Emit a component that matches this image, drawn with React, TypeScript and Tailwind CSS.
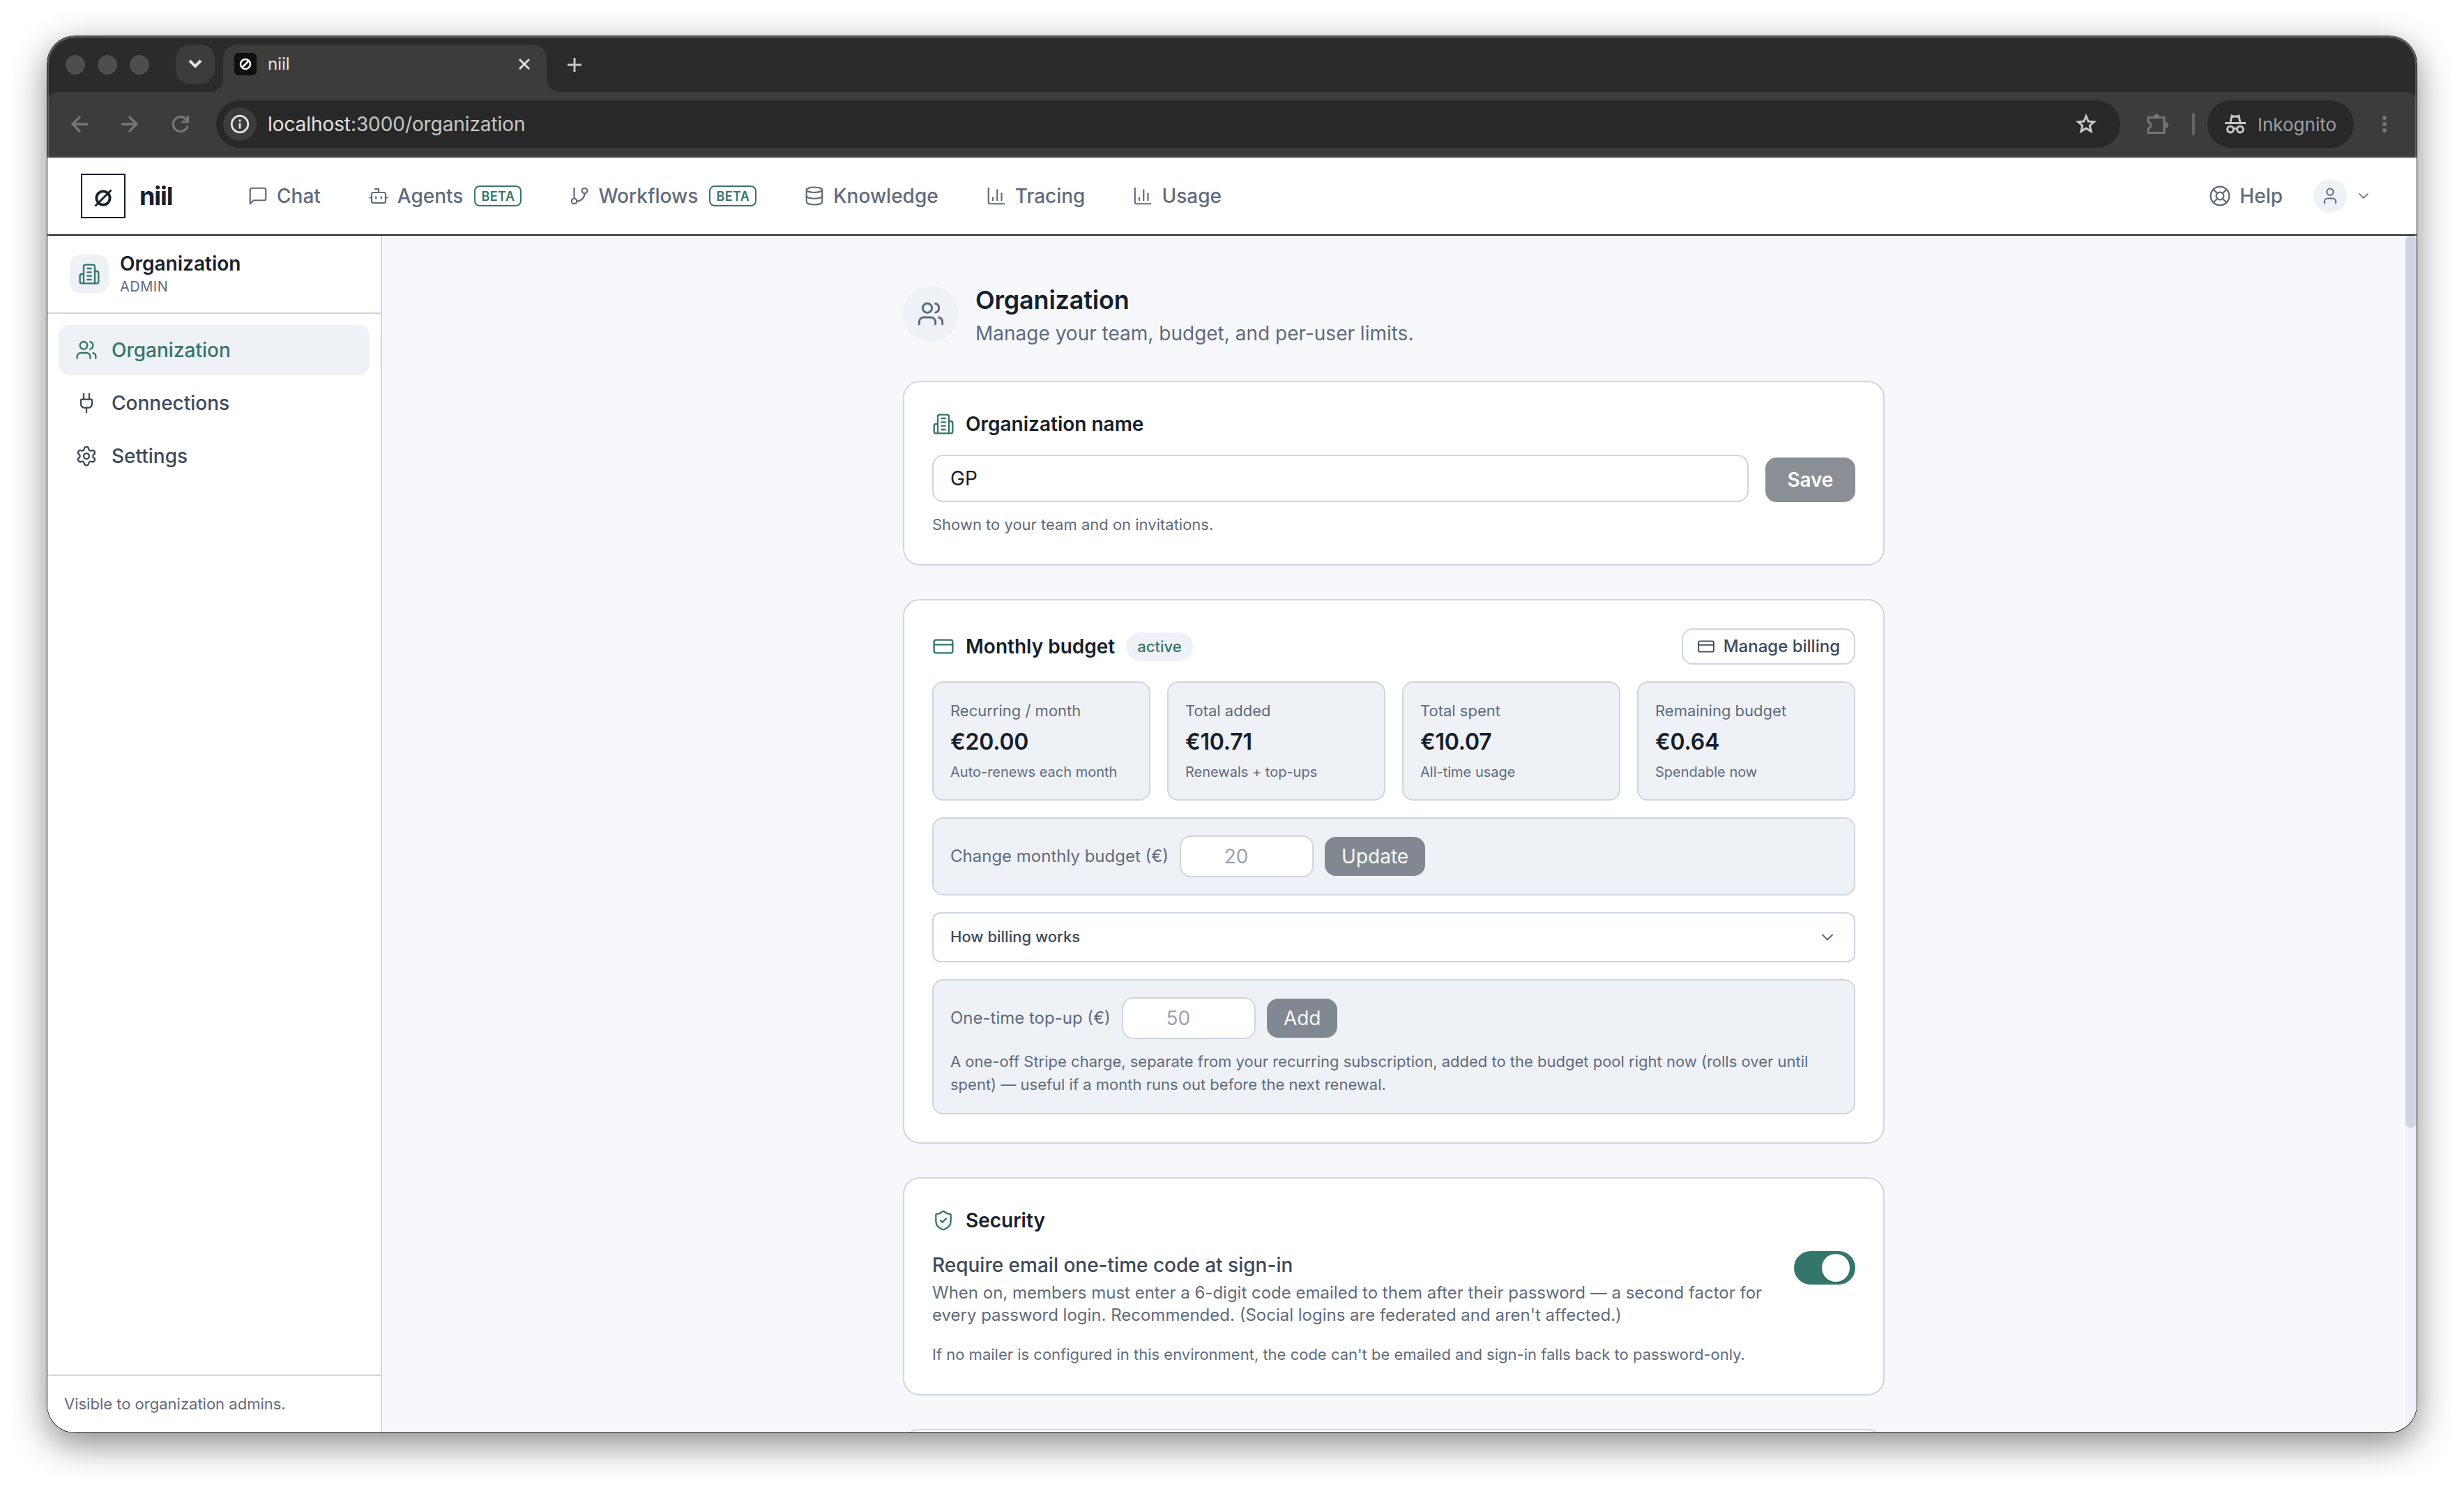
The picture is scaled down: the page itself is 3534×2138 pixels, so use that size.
import type { ComponentType, ReactNode } from 'react';
import {
  Bot,
  ChevronDown,
  CreditCard,
  Database,
  GitBranch,
  LifeBuoy,
  Plug,
  Settings,
  ShieldCheck,
  User,
  Users,
} from 'lucide-react';

type IconProps = { size?: number; strokeWidth?: number; className?: string };

function Svg({ size = 24, strokeWidth = 2, className, children }: IconProps & { children: ReactNode }) {
  return (
    <svg
      width={size}
      height={size}
      viewBox="0 0 24 24"
      fill="none"
      stroke="currentColor"
      strokeWidth={strokeWidth}
      strokeLinecap="round"
      strokeLinejoin="round"
      className={className}
    >
      {children}
    </svg>
  );
}

const ChatIcon = (p: IconProps) => (
  <Svg {...p}>
    <path d="M21 15a2 2 0 0 1-2 2H7l-4 4V5a2 2 0 0 1 2-2h14a2 2 0 0 1 2 2z" />
  </Svg>
);

const ChartIcon = (p: IconProps) => (
  <Svg {...p}>
    <path d="M3 3v16a2 2 0 0 0 2 2h16" />
    <path d="M8 17v-3" />
    <path d="M13 17V5" />
    <path d="M18 17V9" />
  </Svg>
);

const BuildingIcon = (p: IconProps) => (
  <Svg {...p}>
    <path d="M6 22V4a2 2 0 0 1 2-2h8a2 2 0 0 1 2 2v18Z" />
    <path d="M6 12H4a2 2 0 0 0-2 2v6a2 2 0 0 0 2 2h2" />
    <path d="M18 9h2a2 2 0 0 1 2 2v9a2 2 0 0 1-2 2h-2" />
    <path d="M10 6h4M10 10h4M10 14h4M10 18h4" />
  </Svg>
);

const NAV: { label: string; icon: ComponentType<IconProps>; beta?: boolean }[] = [
  { label: 'Chat', icon: ChatIcon },
  { label: 'Agents', icon: Bot, beta: true },
  { label: 'Workflows', icon: GitBranch, beta: true },
  { label: 'Knowledge', icon: Database },
  { label: 'Tracing', icon: ChartIcon },
  { label: 'Usage', icon: ChartIcon },
];

const SIDEBAR: { label: string; icon: ComponentType<IconProps>; active?: boolean }[] = [
  { label: 'Organization', icon: Users, active: true },
  { label: 'Connections', icon: Plug },
  { label: 'Settings', icon: Settings },
];

const STATS = [
  { label: 'Recurring / month', value: '€20.00', hint: 'Auto-renews each month' },
  { label: 'Total added', value: '€10.71', hint: 'Renewals + top-ups' },
  { label: 'Total spent', value: '€10.07', hint: 'All-time usage' },
  { label: 'Remaining budget', value: '€0.64', hint: 'Spendable now' },
];

function TabStrip() {
  return (
    <div className="flex h-20 pl-[26px]">
      <div className="flex gap-[18px] pt-[27px]">
        {[0, 1, 2].map((i) => (
          <div key={i} className="size-7 rounded-full border border-[#565656] bg-[#4e4e4e]" />
        ))}
      </div>
      <div className="mt-3 ml-[38px] flex size-14 items-center justify-center rounded-[20px] bg-[#3c3c3c]">
        <svg width="20" height="14" viewBox="0 0 20 14" fill="none" stroke="#e3e3e3" strokeWidth="4">
          <path d="M2 2l8 8 8-8" />
        </svg>
      </div>
      <div className="relative mt-3 ml-3 flex h-[68px] w-[464px] rounded-t-[20px] bg-[#3c3c3c] pt-3 pr-6 pl-4">
        {/* curved feet of the active tab */}
        <div className="absolute bottom-0 -left-5 size-5 bg-[#3c3c3c]">
          <div className="size-full rounded-br-[20px] bg-[#2b2b2b]" />
        </div>
        <div className="absolute -right-5 bottom-0 size-5 bg-[#3c3c3c]">
          <div className="size-full rounded-bl-[20px] bg-[#2b2b2b]" />
        </div>
        <svg width="32" height="32" viewBox="0 0 32 32" fill="none" stroke="#fff" strokeWidth="2.6">
          <rect width="32" height="32" rx="6" fill="#0f0f0f" stroke="none" />
          <circle cx="16" cy="16" r="7" />
          <path d="M11 21L21 11" />
        </svg>
        <span className="ml-4 flex-1 text-[24px] leading-8 text-[#e3e3e3]">niil</span>
        <svg className="mt-2" width="16" height="16" viewBox="0 0 16 16" stroke="#e3e3e3" strokeWidth="2.8">
          <path d="M1 1l14 14M15 1L1 15" />
        </svg>
      </div>
      <svg className="mt-[30px] ml-[29px]" width="22" height="22" viewBox="0 0 22 22" stroke="#c7c7c7" strokeWidth="3">
        <path d="M11 1v20M1 11h20" />
      </svg>
    </div>
  );
}

function Toolbar() {
  return (
    <div className="flex h-[94px] items-center rounded-t-[14px] border-b-2 border-[#474747] bg-[#3c3c3c] pr-[43px] pl-[34px]">
      <svg width="24" height="24" viewBox="0 0 24 24" fill="none" stroke="#757575" strokeWidth="3.4">
        <path d="M24 12H3M13 1L2.2 12 13 23" />
      </svg>
      <svg className="ml-12" width="24" height="24" viewBox="0 0 24 24" fill="none" stroke="#757575" strokeWidth="3.4">
        <path d="M0 12h21M11 1l10.8 11L11 23" />
      </svg>
      <svg className="ml-12" width="26" height="26" viewBox="0 0 26 26" fill="none" stroke="#757575" strokeWidth="3.2">
        <path d="M23 15.5A10.5 10.5 0 1 1 20.5 5.8L23 8.5" />
        <path d="M23.4 1v8.6h-9" />
      </svg>

      <div className="ml-[38px] flex h-[68px] flex-1 items-center rounded-full bg-[#282828] pr-[33px] pl-[10px]">
        <div className="flex size-12 items-center justify-center rounded-full bg-[#3c3c3c]">
          <svg width="28" height="28" viewBox="0 0 28 28" fill="none" stroke="#e3e3e3" strokeWidth="2.8">
            <circle cx="14" cy="14" r="11.8" />
            <path d="M14 12.5v8M14 7.5v3" />
          </svg>
        </div>
        <span className="ml-4 flex-1 text-[28px] tracking-[-0.08px] text-[#c7c7c7]">
          <span className="text-[#e3e3e3]">localhost</span>:3000/organization
        </span>
        <svg width="32" height="32" viewBox="0 0 32 32" fill="none" stroke="#c7c7c7" strokeWidth="3">
          <path d="M16 4.5l3.2 7.6 8.3.7-6.3 5.4 1.9 8.1L16 22l-7.1 4.3 1.9-8.1-6.3-5.400 8.300-.7z" />
        </svg>
      </div>

      <svg className="ml-[37px]" width="32" height="34" viewBox="0 0 32 34" fill="none" stroke="#757575" strokeWidth="3.2">
        <path d="M3 7.500h23v22H3v-6.200a5 5 0 0 0 0-9.600z" strokeLinejoin="round" />
        <path d="M11 6.500a4 4 0 0 1 8 0zM27.500 14a4.500 4.500 0 0 1 0 9z" fill="#757575" stroke="none" />
      </svg>
      <div className="ml-[34px] h-8 w-1 rounded-full bg-[#656565]" />
      <div className="ml-[18px] flex h-[68px] w-[210px] items-center rounded-full bg-[#282828] pl-[25px]">
        <svg width="30" height="28" viewBox="0 0 30 28" fill="none" stroke="#c7c7c7" strokeWidth="3">
          <path d="M0 12.500h30" strokeWidth="3.200" />
          <path d="M8 11.500l2-9.400 2.600 1.300q2.400-1.200 4.800 0l2.600-1.300L22 11.500" />
          <circle cx="8" cy="21.500" r="4.400" />
          <circle cx="22" cy="21.500" r="4.400" />
          <path d="M12 20.800q3-1.600 6 0" />
        </svg>
        <span className="ml-[17px] text-[26px] text-[#9aa0a6]">Inkognito</span>
      </div>
      <div className="ml-[41px] flex flex-col gap-[3px]">
        <div className="size-1.5 rounded-full bg-[#757575]" />
        <div className="size-1.5 rounded-full bg-[#757575]" />
        <div className="size-1.5 rounded-full bg-[#757575]" />
      </div>
    </div>
  );
}

function Header() {
  return (
    <header className="flex h-28 items-center border-b-2 border-[#16202c] bg-white pr-16 pl-12">
      <div className="flex w-[239px] items-center">
        <div className="flex size-16 items-center justify-center border-2 border-[#16202c]">
          <svg className="mt-[5px]" width="26" height="26" viewBox="0 0 26 26" fill="none" stroke="#16202c">
            <circle cx="13" cy="13" r="9.6" strokeWidth="3.8" />
            <path d="M1.5 24.5l23-23" strokeWidth="3" />
          </svg>
        </div>
        <span className="ml-5 text-[36px] font-bold tracking-[-0.03em] text-[#16202c]">niil</span>
      </div>
      <nav className="flex flex-1 items-center gap-[68px]">
        {NAV.map(({ label, icon: Icon, beta }) => (
          <div key={label} className="flex items-center gap-3 text-[28px] font-medium">
            <Icon size={30} strokeWidth={1.75} />
            {label}
            {beta && (
              <span className="ml-1 flex h-[30px] items-center rounded-lg border-2 border-[#35766b] px-2 text-[18px] font-semibold tracking-[0.025em] text-[#35766b]">
                BETA
              </span>
            )}
          </div>
        ))}
      </nav>
      <div className="flex items-center gap-3 text-[28px] font-medium">
        <LifeBuoy size={32} strokeWidth={1.75} />
        Help
      </div>
      <div className="ml-11 flex items-center gap-3">
        <div className="flex size-12 items-center justify-center rounded-full bg-[#eef1f6]">
          <User size={28} strokeWidth={1.75} />
        </div>
        <ChevronDown size={24} strokeWidth={1.75} />
      </div>
    </header>
  );
}

function Sidebar() {
  return (
    <aside className="flex w-[480px] flex-col border-r-2 border-[#cfd6e1] bg-white">
      <div className="flex h-28 items-center gap-4 border-b-2 border-[#cfd6e1] px-8">
        <div className="flex size-14 items-center justify-center rounded-2xl bg-[#eef1f6] text-[#35766b]">
          <BuildingIcon size={32} strokeWidth={1.75} />
        </div>
        <div>
          <div className="text-[28px] leading-[35px] font-semibold text-[#16202c]">Organization</div>
          <div className="text-[20px] leading-[30px] tracking-[0.025em]">ADMIN</div>
        </div>
      </div>
      <div className="flex flex-1 flex-col gap-1 p-4">
        {SIDEBAR.map(({ label, icon: Icon, active }) => (
          <div
            key={label}
            className={`flex h-[72px] items-center gap-5 rounded-2xl px-6 text-[28px] font-medium ${
              active ? 'bg-[#eef1f6] text-[#35766b]' : 'text-[#3d495b]'
            }`}
          >
            <Icon size={32} strokeWidth={1.75} />
            {label}
          </div>
        ))}
      </div>
      <div className="border-t-2 border-[#cfd6e1] p-6 text-[22px] leading-[33px]">Visible to organization admins.</div>
    </aside>
  );
}

function Card({ children }: { children?: ReactNode }) {
  return <section className="rounded-3xl border-2 border-[#cfd6e1] bg-white p-10">{children}</section>;
}

function CardTitle({ icon: Icon, children }: { icon: ComponentType<IconProps>; children: ReactNode }) {
  return (
    <div className="flex items-center gap-4">
      <Icon size={32} strokeWidth={1.75} className="text-[#35766b]" />
      <h2 className="text-[28px] leading-10 font-semibold text-[#16202c]">{children}</h2>
    </div>
  );
}

function AmountRow({ label, value, action }: { label: string; value: string; action: string }) {
  return (
    <div className="flex items-center gap-4">
      <span className="text-[24px] leading-8">{label}</span>
      <div className="flex h-[60px] w-48 items-center justify-center rounded-2xl border-2 border-[#cfd6e1] bg-white pr-[30px] text-[28px] text-[#9ca1ab]">
        {value}
      </div>
      <div className="flex h-14 items-center rounded-2xl bg-[#828891] px-6 text-[28px] text-[#f8f9fb]">{action}</div>
    </div>
  );
}

function NameCard() {
  return (
    <Card>
      <CardTitle icon={BuildingIcon}>Organization name</CardTitle>
      <div className="mt-6 flex items-end gap-6">
        <div className="flex h-[68px] flex-1 items-center rounded-2xl border-2 border-[#cfd6e1] px-6 text-[28px] text-[#16202c]">
          GP
        </div>
        <div className="flex h-16 items-center rounded-2xl bg-[#8a8f95] px-8 text-[28px] font-semibold tracking-[-0.2px] text-white">
          Save
        </div>
      </div>
      <p className="mt-4 text-[22px] leading-[33px]">Shown to your team and on invitations.</p>
    </Card>
  );
}

function BudgetCard() {
  return (
    <Card>
      <div className="flex items-center gap-4">
        <CardTitle icon={CreditCard}>Monthly budget</CardTitle>
        <span className="rounded-full bg-[#eef1f6] px-4 py-1 text-[22px] leading-[33px] font-medium text-[#35766b]">
          active
        </span>
        <div className="ml-auto flex h-[52px] items-center gap-3 rounded-2xl border-2 border-[#cfd6e1] px-5 text-[24px] font-medium text-[#3d495b]">
          <CreditCard size={26} strokeWidth={1.75} />
          Manage billing
        </div>
      </div>

      <div className="mt-6 grid grid-cols-4 gap-6">
        {STATS.map((s) => (
          <div key={s.label} className="rounded-2xl border-2 border-[#cfd6e1] bg-[#eef1f6] p-6">
            <div className="text-[22px] leading-[33px]">{s.label}</div>
            <div className="mt-1 text-[32px] leading-[48px] font-semibold tracking-[-0.2px] text-[#16202c]">
              {s.value}
            </div>
            <div className="mt-1 text-[20px] leading-[30px]">{s.hint}</div>
          </div>
        ))}
      </div>

      <div className="mt-6 rounded-2xl border-2 border-[#cfd6e1] bg-[#eef1f6] p-6">
        <AmountRow label="Change monthly budget (€)" value="20" action="Update" />
      </div>

      <div className="mt-6 flex h-[72px] items-center justify-between rounded-xl border-2 border-[#cfd6e1] px-6 pb-px text-[22px] font-medium text-[#3d495b]">
        How billing works
        <ChevronDown size={28} strokeWidth={1.75} className="text-[#5f6b7c]" />
      </div>

      <div className="mt-6 rounded-2xl border-2 border-[#cfd6e1] bg-[#eef1f6] p-6">
        <AmountRow label="One-time top-up (€)" value="50" action="Add" />
        <p className="mt-4 text-[22px] leading-[33px]">
          A one-off Stripe charge, separate from your recurring subscription, added to the budget pool right now (rolls
          over until spent) — useful if a month runs out before the next renewal.
        </p>
      </div>
    </Card>
  );
}

function SecurityCard() {
  return (
    <Card>
      <CardTitle icon={ShieldCheck}>Security</CardTitle>
      <div className="mt-6 flex items-start justify-between">
        <div className="w-[1200px]">
          <div className="text-[28px] leading-10 font-medium text-[#3d495b]">Require email one-time code at sign-in</div>
          <p className="mt-1 text-[24px] leading-8">
            When on, members must enter a 6-digit code emailed to them after their password — a second factor for every
            password login. Recommended. (Social logins are federated and aren't affected.)
          </p>
        </div>
        <div className="flex h-12 w-[88px] items-center justify-end rounded-full bg-[#35766b] pr-2">
          <div className="size-10 rounded-full bg-white shadow-sm" />
        </div>
      </div>
      <p className="mt-6 text-[22px] leading-[33px]">
        If no mailer is configured in this environment, the code can't be emailed and sign-in falls back to
        password-only.
      </p>
    </Card>
  );
}

export default function App() {
  return (
    <div className="h-[2138px] w-[3534px] overflow-hidden bg-white px-[68px] pt-[52px] font-['Inter',sans-serif] text-[#5f6b7c]">
      <div className="relative h-[2002px] w-[3398px] rounded-[40px] shadow-[0_0_0_1px_#1a1a1a,0_16px_52px_rgba(0,0,0,0.48)]">
        <div className="flex h-full flex-col overflow-hidden rounded-[40px] bg-[#2b2b2b]">
          <TabStrip />
          <Toolbar />
          <Header />
          <div className="flex min-h-0 flex-1 bg-[#f7f8fc]">
            <Sidebar />
            <main className="flex-1 overflow-hidden pt-16">
              <div className="mx-auto flex w-[1408px] flex-col gap-12">
                <div className="flex items-center gap-6">
                  <div className="flex size-20 items-center justify-center rounded-full bg-[#eef1f6]">
                    <Users size={40} strokeWidth={1.75} />
                  </div>
                  <div>
                    <h1 className="text-[36px] leading-[56px] font-semibold tracking-[-0.2px] text-[#16202c]">
                      Organization
                    </h1>
                    <p className="text-[28px] leading-10">Manage your team, budget, and per-user limits.</p>
                  </div>
                </div>
                <NameCard />
                <BudgetCard />
                <SecurityCard />
                <Card />
              </div>
            </main>
            <div className="w-4 bg-[#eef1f6]">
              <div className="h-[1279px] rounded-full bg-[#cfd6e1]" />
            </div>
          </div>
        </div>
        {/* light rim around the window frame */}
        <div className="pointer-events-none absolute inset-0 rounded-[40px] shadow-[inset_0_0_0_2px_rgba(255,255,255,0.22)]" />
      </div>
    </div>
  );
}
